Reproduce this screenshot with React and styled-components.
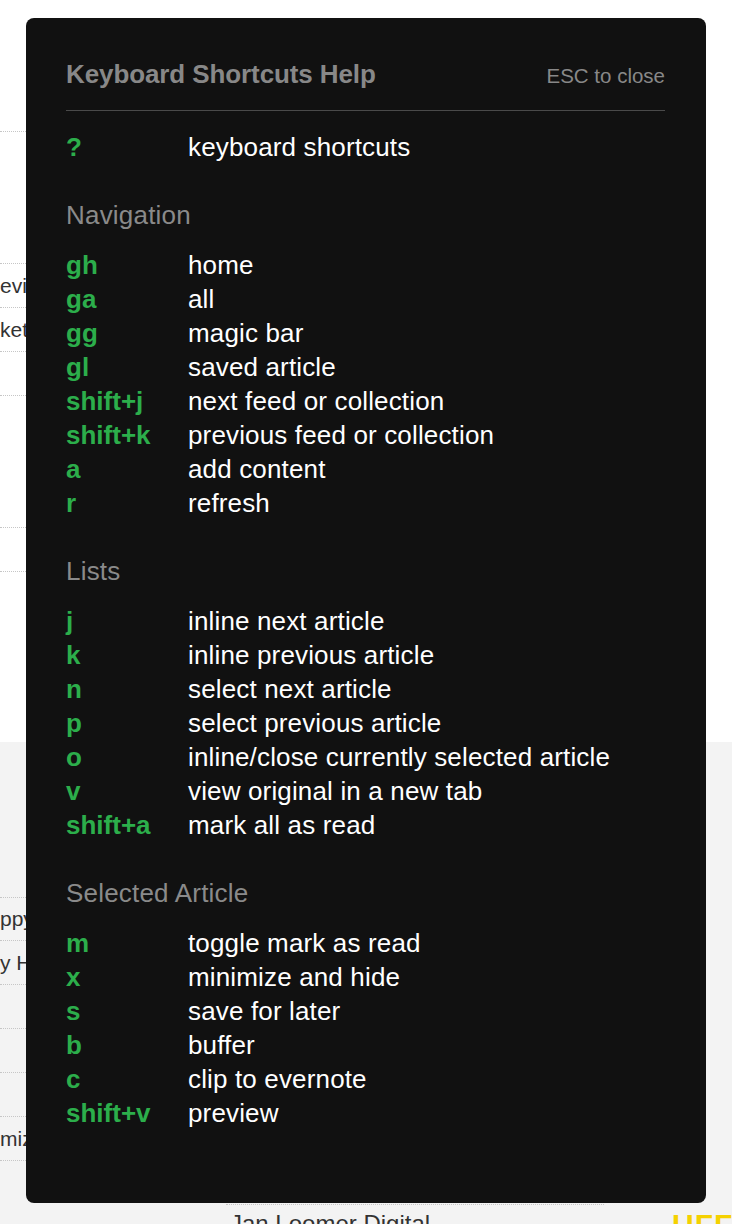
import styled, { createGlobalStyle } from "styled-components";

// ─── Datos ────────────────────────────────────────────────────────────────

const sections = [
  {
    title: null,
    items: [["?", "keyboard shortcuts"]],
  },
  {
    title: "Navigation",
    items: [
      ["gh", "home"],
      ["ga", "all"],
      ["gg", "magic bar"],
      ["gl", "saved article"],
      ["shift+j", "next feed or collection"],
      ["shift+k", "previous feed or collection"],
      ["a", "add content"],
      ["r", "refresh"],
    ],
  },
  {
    title: "Lists",
    items: [
      ["j", "inline next article"],
      ["k", "inline previous article"],
      ["n", "select next article"],
      ["p", "select previous article"],
      ["o", "inline/close currently selected article"],
      ["v", "view original in a new tab"],
      ["shift+a", "mark all as read"],
    ],
  },
  {
    title: "Selected Article",
    items: [
      ["m", "toggle mark as read"],
      ["x", "minimize and hide"],
      ["s", "save for later"],
      ["b", "buffer"],
      ["c", "clip to evernote"],
      ["shift+v", "preview"],
    ],
  },
];

const topLeftRows = [
  [132, ""],
  [132, ""],
  [44, "evi"],
  [44, "ket"],
  [44, ""],
  [132, ""],
  [44, ""],
];

const bottomLeftRows = [
  [156, ""],
  [43, "ppy"],
  [44, "y H"],
  [44, ""],
  [44, ""],
  [44, ""],
  [44, "miz"],
];

const bottomRightRows = [
  [44, "z B"],
  [44, "ah"],
  [43, "ick"],
  [44, "cia"],
  [44, "ark"],
  [44, "e C"],
  [44, "e K"],
  [44, "bo"],
];

// ─── Estilos ──────────────────────────────────────────────────────────────

const GlobalStyle = createGlobalStyle`
  html, body {
    margin: 0;
    padding: 0;
    background: #fff;
  }
  body {
    font-family: "Liberation Sans", Arial, Helvetica, sans-serif;
  }
`;

const Page = styled.div`
  position: relative;
  width: 732px;
  height: 1224px;
  overflow: hidden;
  display: flex;
  flex-direction: column;
`;

const TopArea = styled.div`
  height: 742px;
  flex-shrink: 0;
  background: #fff;
  display: flex;
`;

const BottomArea = styled.div`
  flex: 1;
  background: #f3f3f3;
  display: flex;
`;

const SideList = styled.div`
  width: ${(p) => p.$w}px;
  flex-shrink: 0;
  display: flex;
  flex-direction: column;
  overflow: hidden;
  padding-top: ${(p) => p.$top || 0}px;
`;

const ListRow = styled.div`
  box-sizing: border-box;
  height: ${(p) => p.$h}px;
  flex-shrink: 0;
  border-bottom: 1px dotted #c6c6c6;
  display: flex;
  align-items: center;
  font-size: 21px;
  color: #333;
  white-space: nowrap;
  overflow: hidden;
`;

const MidCol = styled.div`
  flex: 1;
  display: flex;
  flex-direction: column;
  padding-top: 462px;
`;

const FooterRow = styled.div`
  display: flex;
  align-items: flex-start;
`;

const FooterItem = styled.div`
  margin-left: 200px;
  width: 374px;
  border-top: 1px dotted #c6c6c6;
  padding: 4px 0 0 4px;
  font-size: 24px;
  line-height: 30px;
  color: #333;
  white-space: nowrap;
`;

const Brand = styled.div`
  margin-left: 68px;
  padding-top: 3px;
  font-size: 30px;
  font-weight: 700;
  color: #f5d100;
  letter-spacing: 1px;
  line-height: 36px;
`;

const Modal = styled.div`
  position: absolute;
  top: 18px;
  left: 26px;
  width: 680px;
  height: 1185px;
  box-sizing: border-box;
  padding: 39px 41px 40px 40px;
  background: #111;
  border-radius: 8px;
  color: #fff;
`;

const ModalHeader = styled.div`
  display: flex;
  justify-content: space-between;
  align-items: baseline;
  padding-bottom: 19px;
  border-bottom: 1px solid #4a4a4a;
  margin-bottom: 19px;
`;

const ModalTitle = styled.h2`
  margin: 0;
  font-size: 26px;
  line-height: 34px;
  font-weight: 700;
  color: #888;
  letter-spacing: -0.1px;
`;

const CloseHint = styled.span`
  font-size: 20.5px;
  color: #888;
`;

const Section = styled.div`
  & + & {
    margin-top: 34px;
  }
`;

const SectionTitle = styled.div`
  font-size: 26px;
  line-height: 34px;
  color: #8a8a8a;
  margin-bottom: 16px;
  letter-spacing: 0.2px;
`;

const Row = styled.div`
  display: grid;
  grid-template-columns: 122px 1fr;
  font-size: 26px;
  line-height: 34px;
  white-space: nowrap;
`;

const Key = styled.span`
  font-weight: 700;
  color: #2cae4b;
`;

const Desc = styled.span`
  color: #fff;
  letter-spacing: 0.15px;
`;

// ─── Componente ───────────────────────────────────────────────────────────

function Rows({ rows }) {
  return rows.map(([h, text], i) => (
    <ListRow key={i} $h={h}>
      {text}
    </ListRow>
  ));
}

export default function App() {
  return (
    <>
      <GlobalStyle />
      <Page>
        <TopArea>
          <SideList $w={26}>
            <Rows rows={topLeftRows} />
          </SideList>
        </TopArea>

        <BottomArea>
          <SideList $w={26}>
            <Rows rows={bottomLeftRows} />
          </SideList>
          <MidCol>
            <FooterRow>
              <FooterItem>Jan Loomer Digital</FooterItem>
              <Brand>UFFU</Brand>
            </FooterRow>
          </MidCol>
          <SideList $w={26} $top={68}>
            <Rows rows={bottomRightRows} />
          </SideList>
        </BottomArea>

        <Modal>
          <ModalHeader>
            <ModalTitle>Keyboard Shortcuts Help</ModalTitle>
            <CloseHint>ESC to close</CloseHint>
          </ModalHeader>

          {sections.map((section, i) => (
            <Section key={i}>
              {section.title && <SectionTitle>{section.title}</SectionTitle>}
              {section.items.map(([key, desc]) => (
                <Row key={key}>
                  <Key>{key}</Key>
                  <Desc>{desc}</Desc>
                </Row>
              ))}
            </Section>
          ))}
        </Modal>
      </Page>
    </>
  );
}
